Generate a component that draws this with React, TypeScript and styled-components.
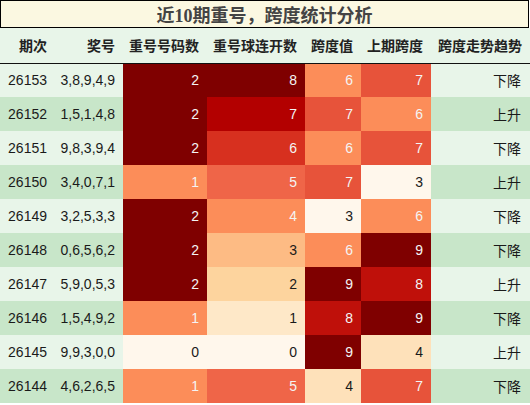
import React from 'react';
import styled, { createGlobalStyle } from 'styled-components';

const GlobalStyle = createGlobalStyle`
  html, body {
    margin: 0;
    padding: 0;
    background: #ffffff;
  }
`;

type Row = {
  issue: string;
  balls: string;
  repeat: number;
  streak: number;
  span: number;
  prevSpan: number;
  trend: string;
};

const rows: Row[] = [
  { issue: '26153', balls: '3,8,9,4,9', repeat: 2, streak: 8, span: 6, prevSpan: 7, trend: '下降' },
  { issue: '26152', balls: '1,5,1,4,8', repeat: 2, streak: 7, span: 7, prevSpan: 6, trend: '上升' },
  { issue: '26151', balls: '9,8,3,9,4', repeat: 2, streak: 6, span: 6, prevSpan: 7, trend: '下降' },
  { issue: '26150', balls: '3,4,0,7,1', repeat: 1, streak: 5, span: 7, prevSpan: 3, trend: '上升' },
  { issue: '26149', balls: '3,2,5,3,3', repeat: 2, streak: 4, span: 3, prevSpan: 6, trend: '下降' },
  { issue: '26148', balls: '0,6,5,6,2', repeat: 2, streak: 3, span: 6, prevSpan: 9, trend: '下降' },
  { issue: '26147', balls: '5,9,0,5,3', repeat: 2, streak: 2, span: 9, prevSpan: 8, trend: '上升' },
  { issue: '26146', balls: '1,5,4,9,2', repeat: 1, streak: 1, span: 8, prevSpan: 9, trend: '下降' },
  { issue: '26145', balls: '9,9,3,0,0', repeat: 0, streak: 0, span: 9, prevSpan: 4, trend: '上升' },
  { issue: '26144', balls: '4,6,2,6,5', repeat: 1, streak: 5, span: 4, prevSpan: 7, trend: '下降' },
];

// OrRd, 9 stops, linearly interpolated
const orRd = ['#fff7ec', '#fee8c8', '#fdd49e', '#fdbb84', '#fc8d59', '#ef6548', '#d7301f', '#b30000', '#7f0000'];

const hexToRgb = (h: string) => [1, 3, 5].map((i) => parseInt(h.slice(i, i + 2), 16));

const heat = (t: number) => {
  const x = Math.max(0, Math.min(1, t)) * (orRd.length - 1);
  const i = Math.min(Math.floor(x), orRd.length - 2);
  const f = x - i;
  const a = hexToRgb(orRd[i]);
  const b = hexToRgb(orRd[i + 1]);
  const c = a.map((v, k) => Math.round(v + (b[k] - v) * f));
  return `rgb(${c[0]}, ${c[1]}, ${c[2]})`;
};

const range = (key: 'repeat' | 'streak' | 'span' | 'prevSpan') => {
  const vals = rows.map((r) => r[key]);
  return [Math.min(...vals), Math.max(...vals)];
};

const Page = styled.div`
  width: 530px;
  font-family: "Liberation Sans", "Noto Sans CJK SC", sans-serif;
`;

const TitleBox = styled.div`
  box-sizing: border-box;
  height: 28px;
  width: 529px;
  border: 1px solid #000;
  background: #fbf8e1;
  display: flex;
  align-items: center;
  justify-content: center;
  font-family: "Liberation Serif", "Noto Sans CJK SC", serif;
  font-size: 18px;
  font-weight: bold;
  color: #444;
`;

const Table = styled.table`
  width: 530px;
  border-collapse: collapse;
  table-layout: fixed;
`;

const HeadRow = styled.tr`
  background: #e8f5e9;
  height: 35px;
  border-bottom: 1px solid #111;
`;

const HeadCell = styled.th`
  padding: 0 8px 0 0;
  text-align: right;
  font-family: "Noto Sans CJK SC", sans-serif;
  font-size: 14px;
  font-weight: bold;
  color: #222;
  white-space: nowrap;
`;

const BodyRow = styled.tr<{ $alt: boolean }>`
  height: 34px;
  background: ${(p) => (p.$alt ? '#c8e6c9' : '#e8f5e9')};
`;

const Cell = styled.td`
  padding: 0 8px 0 0;
  text-align: right;
  font-size: 14px;
  color: #1a1a1a;
  white-space: nowrap;
`;

const HeatCell = styled(Cell)<{ $light: boolean }>`
  color: ${(p) => (p.$light ? '#f4f4f4' : '#1a1a1a')};
`;

const TrendCell = styled(Cell)`
  padding-right: 9px;
  font-family: "Noto Sans CJK SC", sans-serif;
`;

const widths = [55, 68, 84, 98, 56, 70, 99];
const heads = ['期次', '奖号', '重号号码数', '重号球连开数', '跨度值', '上期跨度', '跨度走势趋势'];
const heatKeys = ['repeat', 'streak', 'span', 'prevSpan'] as const;
const ranges = heatKeys.map(range);

const App: React.FC = () => (
  <Page>
    <GlobalStyle />
    <TitleBox>近10期重号，跨度统计分析</TitleBox>
    <Table>
      <colgroup>
        {widths.map((w, i) => (
          <col key={i} style={{ width: w }} />
        ))}
      </colgroup>
      <thead>
        <HeadRow>
          {heads.map((h) => (
            <HeadCell key={h}>{h}</HeadCell>
          ))}
        </HeadRow>
      </thead>
      <tbody>
        {rows.map((r, i) => (
          <BodyRow key={r.issue} $alt={i % 2 === 1}>
            <Cell>{r.issue}</Cell>
            <Cell>{r.balls}</Cell>
            {heatKeys.map((k, j) => {
              const [lo, hi] = ranges[j];
              const t = hi === lo ? 0 : (r[k] - lo) / (hi - lo);
              return (
                <HeatCell key={k} $light={t >= 0.5} style={{ background: heat(t) }}>
                  {r[k]}
                </HeatCell>
              );
            })}
            <TrendCell>{r.trend}</TrendCell>
          </BodyRow>
        ))}
      </tbody>
    </Table>
  </Page>
);

export default App;
